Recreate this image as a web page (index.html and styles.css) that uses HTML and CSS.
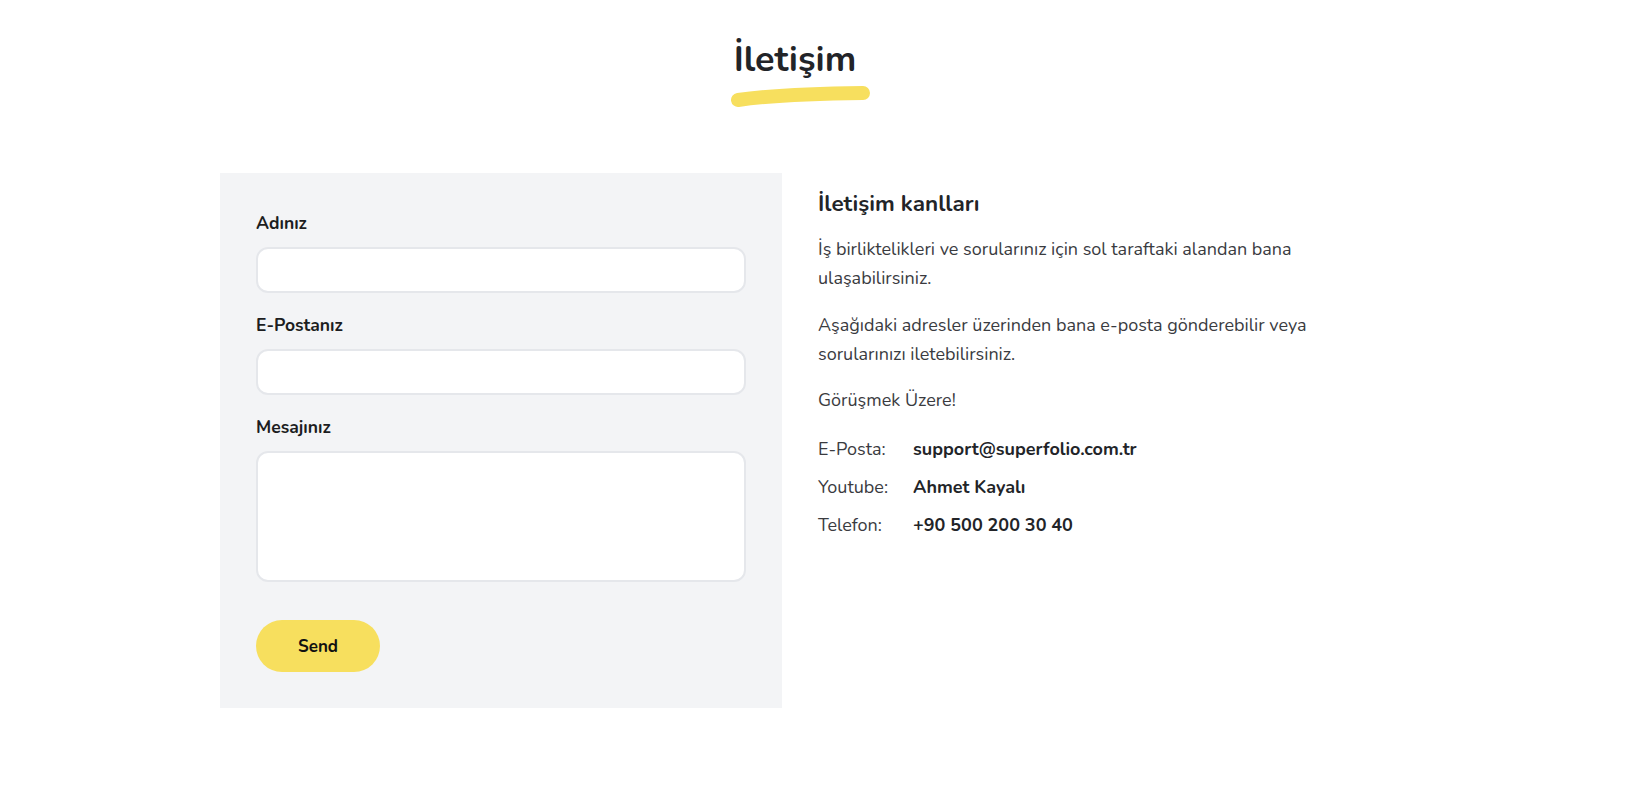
FILE: index.html
```html
<!DOCTYPE html>
<html lang="tr">
<head>
<meta charset="utf-8">
<title>İletişim</title>
<link rel="stylesheet" href="styles.css">
</head>
<body>
<div class="page">
  <div class="container">
    <header class="section-head">
      <h1 class="title">İletişim</h1>
      <svg class="brush" width="140" height="24" viewBox="0 0 140 24" aria-hidden="true">
        <path d="M8 16 Q 50 10 133 9" fill="none" stroke="#f7df5e" stroke-width="14" stroke-linecap="round"/>
      </svg>
    </header>
    <div class="grid">
      <form class="form-card">
        <div class="field">
          <label class="label" for="ad">Adınız</label>
          <input class="input" id="ad" type="text">
        </div>
        <div class="field">
          <label class="label" for="mail">E-Postanız</label>
          <input class="input" id="mail" type="email">
        </div>
        <div class="field">
          <label class="label" for="msg">Mesajınız</label>
          <textarea class="input textarea" id="msg"></textarea>
        </div>
        <button class="send" type="button">Send</button>
      </form>
      <div class="info">
        <h2 class="info-title">İletişim kanlları</h2>
        <p class="text">İş birliktelikleri ve sorularınız için sol taraftaki alandan bana ulaşabilirsiniz.</p>
        <p class="text">Aşağıdaki adresler üzerinden bana e-posta gönderebilir veya sorularınızı iletebilirsiniz.</p>
        <p class="text">Görüşmek Üzere!</p>
        <dl class="contacts">
          <dt>E-Posta:</dt><dd>support@superfolio.com.tr</dd>
          <dt>Youtube:</dt><dd>Ahmet Kayalı</dd>
          <dt>Telefon:</dt><dd>+90 500 200 30 40</dd>
        </dl>
      </div>
    </div>
  </div>
</div>
</body>
</html>
```
FILE: styles.css
```css
* { box-sizing: border-box; }
body {
  margin: 0;
  background: #fff;
  font-family: "Nunito", Lato, "Noto Sans", sans-serif;
  color: #222428;
}
.page { max-width: 1600px; }
.container { width: 1160px; margin: 0 auto; }

.section-head {
  padding-top: 40px;
  display: flex;
  flex-direction: column;
  align-items: center;
}
.title {
  margin: 0 10px 0 0;
  font-size: 36px;
  line-height: 40px;
  font-weight: 700;
  color: #222428;
}
.brush { display: block; margin-top: 4px; }

.grid {
  margin-top: 65px;
  display: grid;
  grid-template-columns: 562px 562px;
  column-gap: 36px;
  align-items: start;
}

.form-card {
  background: #f3f4f6;
  padding: 38px 36px 36px;
  display: flex;
  flex-direction: column;
}
.field { display: flex; flex-direction: column; margin-bottom: 20px; }
.field:last-of-type { margin-bottom: 0; }
.label {
  font-size: 17.5px;
  line-height: 24px;
  font-weight: 700;
  color: #1c1d21;
  margin-bottom: 12px;
}
.input {
  width: 100%;
  height: 46px;
  border: 2px solid #e5e7eb;
  border-radius: 12px;
  background: #fff;
  font: inherit;
  outline: none;
}
.textarea { height: 131px; resize: none; }
.send {
  margin-top: 38px;
  align-self: flex-start;
  width: 124px;
  height: 52px;
  border: none;
  border-radius: 26px;
  background: #f7df5e;
  color: #111;
  font-family: inherit;
  font-size: 17px;
  font-weight: 700;
}

.info { padding-top: 17px; color: #3a3b3f; }
.info-title {
  margin: 0 0 17px;
  font-size: 22.5px;
  line-height: 28px;
  font-weight: 700;
  color: #222428;
}
.text {
  margin: 0 0 17px;
  font-size: 18px;
  line-height: 29.3px;
}
.contacts {
  margin: 20px 0 0;
  display: grid;
  grid-template-columns: 95px auto;
  row-gap: 8.7px;
  font-size: 18px;
  line-height: 29px;
}
.contacts dt { margin: 0; }
.contacts dd { margin: 0; font-weight: 700; color: #222428; }
```
